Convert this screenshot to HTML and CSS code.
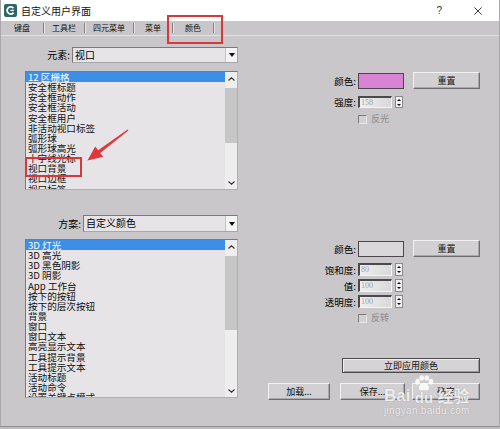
FILE: index.html
```html
<!DOCTYPE html>
<html lang="zh">
<head>
<meta charset="utf-8">
<link rel="stylesheet" href="styles.css">
</head>
<body>
<div class="window">
  <div class="titlebar">
    <svg class="app-icon" viewBox="0 0 13 13"><rect x="0" y="0" width="13" height="13" rx="2" fill="#2c6764"/><path d="M9.5 4.2 A3.6 3.6 0 1 0 9.6 8.6" fill="none" stroke="#fff" stroke-width="1.8"/><path d="M6.4 6.4 H9.8" stroke="#fff" stroke-width="1.4"/></svg>
    <span class="title">自定义用户界面</span>
    <span class="help">?</span>
    <svg class="close" viewBox="0 0 9 9"><path d="M0.5 0.5 L8.5 8.5 M8.5 0.5 L0.5 8.5" stroke="#222" stroke-width="1"/></svg>
  </div>
  <div class="tabs">
    <span class="tab">键盘</span><i class="sep"></i>
    <span class="tab">工具栏</span><i class="sep"></i>
    <span class="tab">四元菜单</span><i class="sep"></i>
    <span class="tab">菜单</span><i class="sep"></i>
    <span class="tab">颜色</span><i class="sep"></i>
  </div>

  <section class="group g1">
    <div class="left">
      <div class="field">
        <label>元素:</label>
        <div class="select w1"><span class="val">视口</span><span class="arrow"></span></div>
      </div>
      <div class="listbox l1">
        <ul class="items">
          <li class="sel">12 区栅格</li>
          <li>安全框标题</li>
          <li>安全框动作</li>
          <li>安全框活动</li>
          <li>安全框用户</li>
          <li>非活动视口标签</li>
          <li>弧形球</li>
          <li>弧形球高光</li>
          <li>十字线光标</li>
          <li>视口背景</li>
          <li>视口边框</li>
          <li>视口标签</li>
        </ul>
        <div class="scrollbar">
          <span class="sb-btn"><svg viewBox="0 0 7 4"><path d="M0.5 3.5 L3.5 0.8 L6.5 3.5" fill="none" stroke="#333" stroke-width="1.1"/></svg></span>
          <span class="thumb"></span>
          <span class="sb-fill"></span>
          <span class="sb-btn"><svg viewBox="0 0 7 4"><path d="M0.5 0.5 L3.5 3.2 L6.5 0.5" fill="none" stroke="#333" stroke-width="1.1"/></svg></span>
        </div>
      </div>
    </div>
    <div class="right">
      <div class="row r-color">
        <label>颜色:</label>
        <span class="swatch pink"></span>
        <span class="btn reset">重置</span>
      </div>
      <div class="row r-spin first">
        <label>强度:</label>
        <span class="spin-input">158</span>
        <span class="spin"><i class="up"></i><i class="down"></i></span>
      </div>
      <div class="row r-check">
        <span class="checkbox"></span><span class="check-label">反光</span>
      </div>
    </div>
  </section>

  <section class="group g2">
    <div class="left">
      <div class="field f2">
        <label>方案:</label>
        <div class="select w2"><span class="val">自定义颜色</span><span class="arrow"></span></div>
      </div>
      <div class="listbox l2">
        <ul class="items">
          <li class="sel">3D 灯光</li>
          <li>3D 高光</li>
          <li>3D 黑色阴影</li>
          <li>3D 阴影</li>
          <li>App 工作台</li>
          <li>按下的按钮</li>
          <li>按下的层次按钮</li>
          <li>背景</li>
          <li>窗口</li>
          <li>窗口文本</li>
          <li>高亮显示文本</li>
          <li>工具提示背景</li>
          <li>工具提示文本</li>
          <li>活动标题</li>
          <li>活动命令</li>
          <li>设置关键点模式</li>
        </ul>
        <div class="scrollbar">
          <span class="sb-btn"><svg viewBox="0 0 7 4"><path d="M0.5 3.5 L3.5 0.8 L6.5 3.5" fill="none" stroke="#333" stroke-width="1.1"/></svg></span>
          <span class="thumb"></span>
          <span class="sb-fill"></span>
          <span class="sb-btn"><svg viewBox="0 0 7 4"><path d="M0.5 0.5 L3.5 3.2 L6.5 0.5" fill="none" stroke="#333" stroke-width="1.1"/></svg></span>
        </div>
      </div>
    </div>
    <div class="right">
      <div class="row r-color">
        <label>颜色:</label>
        <span class="swatch grey"></span>
        <span class="btn reset">重置</span>
      </div>
      <div class="row r-spin first2">
        <label>饱和度:</label>
        <span class="spin-input">80</span>
        <span class="spin"><i class="up"></i><i class="down"></i></span>
      </div>
      <div class="row r-spin next">
        <label>值:</label>
        <span class="spin-input">100</span>
        <span class="spin"><i class="up"></i><i class="down"></i></span>
      </div>
      <div class="row r-spin next">
        <label>透明度:</label>
        <span class="spin-input">100</span>
        <span class="spin"><i class="up"></i><i class="down"></i></span>
      </div>
      <div class="row r-check c2">
        <span class="checkbox"></span><span class="check-label">反转</span>
      </div>
      <div class="row apply-row">
        <span class="btn apply">立即应用颜色</span>
      </div>
      <div class="row bottom-row">
        <span class="btn b-load">加载...</span>
        <span class="btn b-save">保存...</span>
        <span class="btn b-ok">确定</span>
      </div>
    </div>
  </section>

  <div class="mark mark-tab"></div>
  <div class="mark mark-item"></div>
  <svg class="red-arrow" viewBox="0 0 55 40"><polygon points="46.6,4.5 47.4,5.5 19.2,27.9 22.2,31.8 6.5,35.5 14.2,21.4 17.2,25.3" fill="#e0373c"/></svg>

  <div class="watermark">
    <div class="wm-top">
      <span class="wm-bai">Bai</span>
      <span class="wm-du">
        <svg class="paw" viewBox="0 0 24 18"><ellipse cx="5" cy="7" rx="2.6" ry="3.2" fill="#fff"/><ellipse cx="9.5" cy="3" rx="2.6" ry="3" fill="#fff"/><ellipse cx="15" cy="3" rx="2.6" ry="3" fill="#fff"/><ellipse cx="19.5" cy="7" rx="2.6" ry="3.2" fill="#fff"/><path d="M12 8 C8 8 5.5 13 7 15.5 C8.5 17.5 10.5 16 12 16 C13.5 16 15.5 17.5 17 15.5 C18.5 13 16 8 12 8 Z" fill="#fff"/></svg>
        <span class="du">du</span>
      </span>
      <span class="wm-jy">经验</span>
    </div>
    <div class="wm-url">jingyan.baidu.com</div>
  </div>
</div>
</body>
</html>
```
FILE: styles.css
```css
* { box-sizing: border-box; margin: 0; padding: 0; }
html, body { width: 500px; height: 429px; overflow: hidden; }
body {
  font-family: "Noto Sans CJK SC", "Noto Sans", sans-serif;
  font-size: 10px;
  color: #000;
  background: #bebcbe;
}
.window {
  position: relative;
  width: 500px;
  height: 427px;
  background: #c9c7c9;
  border-left: 1px solid #a9a7a9;
  border-right: 1px solid #a9a7a9;
  border-bottom: 1px solid #8f8d8f;
}

/* title bar */
.titlebar {
  height: 21px;
  background: #fff;
  display: flex;
  align-items: center;
}
.app-icon { width: 13px; height: 13px; margin-left: 3px; }
.title { margin-left: 4px; font-size: 10px; line-height: 21px; color: #111; }
.help { margin-left: auto; font-family: "Liberation Sans", sans-serif; font-size: 10px; color: #333; }
.close { width: 8px; height: 8px; margin-left: 32px; margin-right: 17px; }

/* tabs */
.tabs {
  height: 15px;
  display: grid;
  grid-template-columns: 42px 1px 40px 1px 48px 1px 38px 1px 40px 1px;
  align-items: center;
  font-size: 8px;
  border-bottom: 1px solid #e2e0e2;
  background: #c8c6c8;
}
.tab { text-align: center; line-height: 14px; color: #111; }
.sep { display: block; width: 1px; height: 10px; background: #858385; box-shadow: 1px 0 0 #e6e4e6; }

/* groups */
.group {
  display: grid;
  grid-template-columns: 213px 260px;
  padding-left: 24px;
  align-items: start;
}
.g1 { margin-top: 11px; }
.g2 { margin-top: 25px; }

.field { display: flex; justify-content: flex-end; align-items: center; height: 16px; }
.f2 { height: 17px; }
.field label { margin-right: 2px; line-height: 16px; }

.select {
  display: flex;
  height: 16px;
  background: #e6e4e6;
  border: 1px solid #7a787a;
  border-right-color: #a8a6a8;
  border-bottom-color: #a8a6a8;
}
.select.w1 { width: 166px; }
.select.w2 { width: 155px; height: 17px; }
.select .val { flex: 1; padding-left: 2px; line-height: 14px; }
.select .arrow {
  width: 12px;
  background: #f4f4f4;
  border-left: 1px solid #c4c2c4;
  display: flex;
  align-items: center;
  justify-content: center;
}
.select .arrow::after {
  content: "";
  border-left: 3px solid transparent;
  border-right: 3px solid transparent;
  border-top: 4px solid #111;
}

.listbox {
  display: flex;
  background: #e6e4e6;
  border: 1px solid #7a787a;
  border-right-color: #b0aeb0;
  border-bottom-color: #b0aeb0;
}
.l1 { margin-top: 8px; height: 119px; }
.l2 { margin-top: 7px; height: 159px; }
.items {
  flex: 1;
  list-style: none;
  overflow: hidden;
  line-height: 10.15px;
  font-size: 9.6px;
}
.items li { height: 10.15px; padding-left: 2px; white-space: nowrap; color: #111; }
.items li.sel { background: #3c8ee6; color: #fff; }
.scrollbar {
  width: 12px;
  display: flex;
  flex-direction: column;
  background: #efeeef;
}
.sb-btn { height: 13px; display: flex; align-items: center; justify-content: center; }
.sb-btn svg { width: 7px; height: 4px; }
.thumb { margin-top: 3px; background: #c7c6c7; }
.l1 .thumb { height: 55px; }
.l2 .thumb { height: 74px; }
.sb-fill { flex: 1; }

/* right column */
.right { display: flex; flex-direction: column; padding-top: 25px; }
.row { display: flex; align-items: center; }
.row label { width: 118px; text-align: right; margin-right: 2px; line-height: 12px; font-size: 9.5px; }
.r-color { height: 17px; }
.swatch { width: 46px; height: 16px; border: 1px solid #4a484a; }
.swatch.pink { background: #d883d4; }
.swatch.grey { background: #d9d7d9; }

.btn {
  display: flex;
  align-items: center;
  justify-content: center;
  background: #d2d0d2;
  border: 1px solid;
  border-color: #f2f2f2 #6e6c6e #6e6c6e #f2f2f2;
  box-shadow: inset -1px -1px 0 #a9a7a9;
  font-size: 9px;
  color: #111;
}
.reset { width: 67px; height: 17px; margin-left: 9px; }

.r-spin { height: 13px; }
.first { margin-top: 7px; height: 12px; }
.first2 { margin-top: 6px; }
.next { margin-top: 3px; }
.spin-input {
  width: 34px;
  height: 100%;
  background: linear-gradient(to right, #f0eff0, #d9d8d9);
  border-top: 2px solid #4b494b;
  border-left: 2px solid #4b494b;
  border-right: 1px solid #f4f4f4;
  border-bottom: 1px solid #f4f4f4;
  font-family: "Liberation Serif", serif;
  font-size: 8px;
  line-height: 9px;
  color: #a2a0a2;
  padding-left: 1px;
}
.spin {
  width: 8px;
  height: 100%;
  margin-left: 3px;
  background: #efefef;
  border: 1px solid #8c8a8c;
  display: flex;
  flex-direction: column;
  align-items: center;
  justify-content: space-around;
}
.spin .up { border-left: 2px solid transparent; border-right: 2px solid transparent; border-bottom: 2px solid #111; }
.spin .down { border-left: 2px solid transparent; border-right: 2px solid transparent; border-top: 2px solid #111; }

.r-check { height: 10px; margin-top: 6px; }
.c2 { margin-top: 5px; }
.checkbox {
  width: 9px;
  height: 9px;
  margin-left: 120px;
  background: #d2d0d2;
  border: 1px solid;
  border-color: #7d7b7d #e8e8e8 #e8e8e8 #7d7b7d;
}
.check-label { margin-left: 4px; font-size: 9px; color: #8c8a8c; line-height: 10px; }

.apply-row { margin-top: 35px; }
.apply {
  width: 138px;
  height: 15px;
  margin-left: 104px;
  border: 1px solid #4d4b4d;
  box-shadow: inset 1px 1px 0 #f0f0f0, inset -1px -1px 0 #9a989a;
  background: #d5d3d5;
}
.bottom-row { margin-top: 10px; }
.bottom-row .btn { height: 17px; }
.b-load { width: 62px; margin-left: 30px; }
.b-save { width: 65px; margin-left: 10px; }
.b-ok { width: 68px; margin-left: 7px; }

/* annotations */
.mark { position: absolute; border: 2px solid #da363b; }
.mark-tab { left: 166px; top: 15px; width: 56px; height: 29px; }
.mark-item { left: 24px; top: 157px; width: 57px; height: 20px; }
.red-arrow { position: absolute; left: 80px; top: 125px; width: 55px; height: 40px; }

/* watermark */
.watermark {
  position: absolute;
  left: 383px;
  top: 374px;
  color: rgba(255, 255, 255, 0.85);
  text-shadow: 0 0 1px rgba(90, 90, 90, 0.5);
}
.wm-top { display: flex; align-items: flex-end; height: 30px; }
.wm-bai { font-family: "Liberation Sans", sans-serif; font-weight: bold; font-size: 17px; line-height: 17px; }
.wm-du { display: flex; flex-direction: column; align-items: center; width: 25px; margin-left: 1px; }
.paw { width: 22px; height: 17px; opacity: 0.85; }
.du { font-family: "Liberation Sans", sans-serif; font-weight: bold; font-size: 15px; line-height: 13px; margin-top: -1px; }
.wm-jy { font-size: 16px; line-height: 18px; margin-left: 1px; font-weight: bold; }
.wm-url { font-family: "Liberation Sans", sans-serif; font-size: 10px; line-height: 12px; margin-top: 1px; letter-spacing: 0.3px; }
```
